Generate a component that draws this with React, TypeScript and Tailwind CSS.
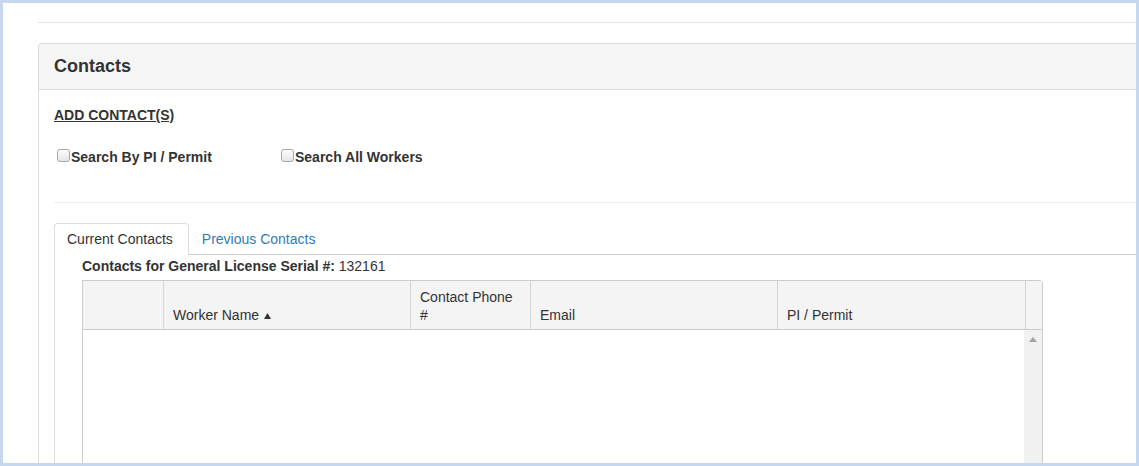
import React from "react"

const columns = [
  { label: "", width: "w-[81px]" },
  { label: "Worker Name", width: "w-[247px]", sort: true },
  { label: "Contact Phone", second: "#", width: "w-[120px]" },
  { label: "Email", width: "w-[247px]" },
  { label: "PI / Permit", width: "w-[248px]" },
]

function FakeCheckbox() {
  return (
    <span className="mt-[2px] inline-block h-[13px] w-[13px] shrink-0 rounded-[3px] border border-[#a6a6a6] bg-gradient-to-b from-[#fcfcfc] to-[#e6e6e6]" />
  )
}

export default function App() {
  return (
    <div className="h-[466px] w-[1139px] overflow-hidden border-[3px] border-[#c5d8f0] bg-white font-['Liberation_Sans',Arial,sans-serif] text-[14px] leading-[20px] text-[#333]">
      <div className="ml-[35px] mt-[19px] border-t border-[#e6e6e6]" />

      <div className="ml-[35px] mt-[20px] rounded-tl-[4px] border-l border-t border-[#dddddd]">
        <div className="flex h-[46px] items-center rounded-tl-[4px] border-b border-[#dddddd] bg-[#f5f5f5] px-[15px] pb-[2px]">
          <h3 className="text-[18px] font-bold leading-[20px]">Contacts</h3>
        </div>

        <div className="pl-[15px] pt-[15px]">
          <a href="#" className="font-bold underline">
            ADD CONTACT(S)
          </a>

          <div className="mt-[22px] flex">
            <label className="flex w-[224px] items-start pl-[3px]">
              <FakeCheckbox />
              <span className="ml-px font-bold">Search By PI / Permit</span>
            </label>
            <label className="flex items-start pl-[3px]">
              <FakeCheckbox />
              <span className="ml-px font-bold">Search All Workers</span>
            </label>
          </div>

          <div className="mt-[35px] border-t border-[#eeeeee]" />

          <div className="mt-[20px]">
            <ul className="flex items-start border-b border-[#cccccc]">
              <li className="-mb-px rounded-t-[4px] border border-b-0 border-[#dddddd] bg-white pb-[6px] pl-[12px] pr-[15px] pt-[5px]">
                Current Contacts
              </li>
              <li className="border-t border-transparent py-[5px] pl-[13px] pr-[12px] text-[#337ab7]">
                Previous Contacts
              </li>
            </ul>

            <div className="border-l border-[#dddddd] pl-[27px] pt-px">
              <div>
                <span className="font-bold">Contacts for General License Serial #:</span> 132161
              </div>

              <div className="mt-[4px] w-[961px] rounded-tr-[4px] border border-b-0 border-[#cccccc]">
                <div className="flex h-[49px] border-b border-[#cccccc] bg-[#f4f4f4] leading-[18px]">
                  {columns.map((c, i) => (
                    <div
                      key={i}
                      className={`${c.width} flex shrink-0 items-end border-r border-[#d4d4d4] pb-[5px] pl-[9px]`}
                    >
                      <span>
                        {c.label}
                        {c.sort && (
                          <svg width="7" height="6" viewBox="0 0 7 6" className="ml-[5px] inline-block align-[1px]">
                            <path d="M3.5 0 L7 6 L0 6 Z" fill="#333" />
                          </svg>
                        )}
                        {c.second && (
                          <>
                            <br />
                            {c.second}
                          </>
                        )}
                      </span>
                    </div>
                  ))}
                  <div className="flex-1" />
                </div>

                <div className="flex h-[200px]">
                  <div className="flex-1" />
                  <div className="flex w-[18px] justify-center bg-[#f1f1f1] pt-[7px]">
                    <svg width="8" height="5" viewBox="0 0 8 5">
                      <path d="M4 0 L8 5 L0 5 Z" fill="#a3a3a3" />
                    </svg>
                  </div>
                </div>
              </div>
            </div>
          </div>
        </div>
      </div>
    </div>
  )
}
